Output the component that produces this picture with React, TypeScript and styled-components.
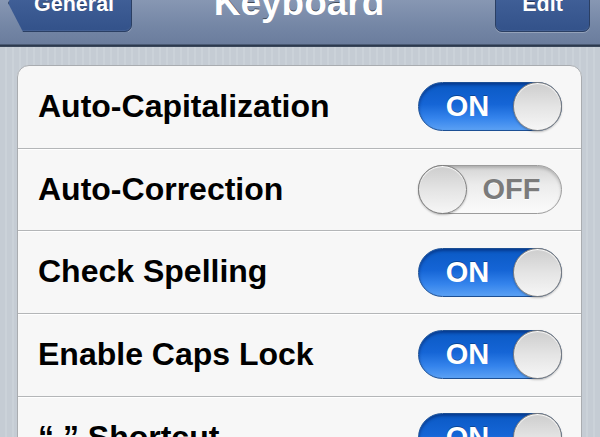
import { createGlobalStyle, styled } from 'styled-components';

const GlobalStyle = createGlobalStyle`
  html, body {
    margin: 0;
    padding: 0;
    height: 100%;
    overflow: hidden;
  }
  body {
    font-family: "Liberation Sans", Arial, sans-serif;
    background-color: #c5ccd4;
    background-image: repeating-linear-gradient(
      90deg,
      #c5ccd4 0px,
      #c5ccd4 5px,
      #cbd2d9 5px,
      #cbd2d9 7px
    );
  }
`;

const NavBar = styled.header`
  position: relative;
  height: 44px;
  overflow: hidden;
  display: grid;
  grid-template-columns: 1fr auto 1fr;
  align-items: start;
  padding: 0 10px 0 8px;
  background: linear-gradient(#8797b3, #7486a5 60%, #6b7d9d);
  border-bottom: 1px solid #4a5a74;
  box-shadow: 0 1px 0 #2c394d, 0 2px 0 #3a475b;
  margin-bottom: 2px;
`;

const NavButton = styled.div<{ $back?: boolean }>`
  margin-top: -26px;
  height: 58px;
  box-sizing: border-box;
  display: flex;
  align-items: flex-end;
  justify-content: ${(p) => (p.$back ? 'flex-start' : 'center')};
  padding: 0 0 16px ${(p) => (p.$back ? '25px' : '0')};
  width: ${(p) => (p.$back ? '124px' : '95px')};
  justify-self: ${(p) => (p.$back ? 'start' : 'end')};
  border-radius: 7px;
  background: linear-gradient(#4d6ca3, #3d5c94 55%, #33528a);
  border: 1px solid #2b3f63;
  box-shadow: inset 0 -1px 0 rgba(255, 255, 255, 0.08), 0 1px 0 rgba(255, 255, 255, 0.25);
  clip-path: ${(p) =>
    p.$back ? 'polygon(0 50%, 15px 0, 100% 0, 100% 100%, 15px 100%)' : 'none'};
  color: #fff;
  font-size: 21.5px;
  font-weight: bold;
  line-height: 21px;
  text-shadow: 0 -1px 0 rgba(0, 0, 0, 0.45);
`;

const Title = styled.h1`
  margin: -16px 0 0;
  font-size: 37px;
  line-height: 37px;
  font-weight: bold;
  color: #fff;
  text-shadow: 0 -1px 0 rgba(0, 0, 0, 0.5);
`;

const Card = styled.section`
  margin: 20px 18px 0 17px;
  background: #f7f7f7;
  border: 1px solid #a9acb0;
  border-radius: 12px;
  box-shadow: 0 1px 0 rgba(255, 255, 255, 0.6);
`;

const Row = styled.div`
  height: 81.7px;
  display: flex;
  align-items: center;
  justify-content: space-between;
  padding: 0 19px 0 20px;
  border-top: 1px solid #b4b6b8;
  box-shadow: inset 0 1px 0 #fff;
  &:first-child {
    border-top: none;
    box-shadow: none;
  }
`;

const Label = styled.span`
  font-size: 32px;
  font-weight: bold;
  color: #000;
  margin-top: -1px;
`;

const Track = styled.div<{ $on: boolean }>`
  position: relative;
  width: 144px;
  height: 49px;
  box-sizing: border-box;
  border-radius: 25px;
  border: 1px solid ${(p) => (p.$on ? '#1c4f94' : '#9c9c9c')};
  background: ${(p) =>
    p.$on
      ? 'linear-gradient(#0a59c4, #1565d6 45%, #3584ec 75%, #5aa0f4)'
      : 'linear-gradient(#d4d4d4, #ececec 40%, #fbfbfb)'};
  box-shadow: inset 0 2px 3px ${(p) => (p.$on ? 'rgba(0,0,40,0.35)' : 'rgba(0,0,0,0.18)')};
  display: flex;
  align-items: center;
  flex-direction: ${(p) => (p.$on ? 'row' : 'row-reverse')};
`;

const SwitchText = styled.span<{ $on: boolean }>`
  flex: 1;
  text-align: center;
  font-size: 29px;
  font-weight: bold;
  color: ${(p) => (p.$on ? '#fff' : '#7b7b7b')};
  text-shadow: ${(p) => (p.$on ? '0 -1px 0 rgba(0,0,0,0.3)' : '0 1px 0 #fff')};
  padding: ${(p) => (p.$on ? '0 0 0 2px' : '0 4px 0 0')};
`;

const Thumb = styled.div`
  width: 49px;
  height: 49px;
  margin: -1px;
  box-sizing: border-box;
  border-radius: 50%;
  border: 1px solid #7e7e7e;
  background: linear-gradient(#cdcdcd, #e4e4e4 50%, #f6f6f6);
  box-shadow: inset 0 1px 1px #fff, 0 1px 2px rgba(0, 0, 0, 0.25);
`;

function Switch({ on }: { on: boolean }) {
  return (
    <Track $on={on}>
      <SwitchText $on={on}>{on ? 'ON' : 'OFF'}</SwitchText>
      <Thumb />
    </Track>
  );
}

const settings = [
  { label: 'Auto-Capitalization', on: true },
  { label: 'Auto-Correction', on: false },
  { label: 'Check Spelling', on: true },
  { label: 'Enable Caps Lock', on: true },
  { label: '“.” Shortcut', on: true },
];

export default function App() {
  return (
    <>
      <GlobalStyle />
      <NavBar>
        <NavButton $back>General</NavButton>
        <Title>Keyboard</Title>
        <NavButton>Edit</NavButton>
      </NavBar>
      <Card>
        {settings.map((s) => (
          <Row key={s.label}>
            <Label>{s.label}</Label>
            <Switch on={s.on} />
          </Row>
        ))}
      </Card>
    </>
  );
}
